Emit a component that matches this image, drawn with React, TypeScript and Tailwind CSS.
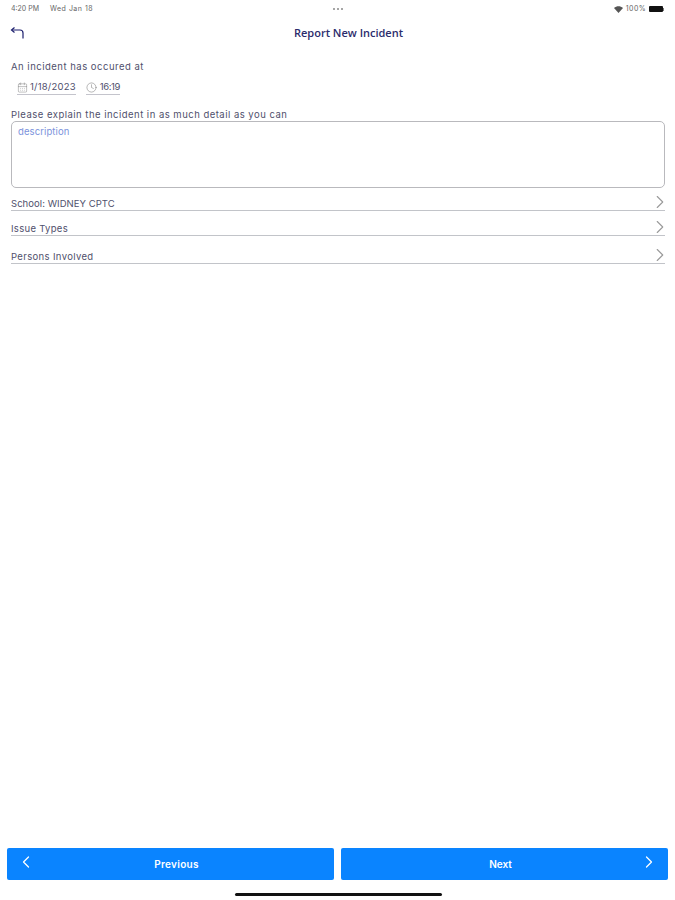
import React from 'react';
import { ChevronLeft, ChevronRight, CalendarDays, Clock } from 'lucide-react';

const rows = [
  { label: 'School: WIDNEY CPTC', height: 'h-[23px]', tracking: 'tracking-[0.05px]' },
  { label: 'Issue Types', height: 'h-[25px]', tracking: 'tracking-[0.3px]' },
  { label: 'Persons Involved', height: 'h-[28px]', tracking: 'tracking-[0.35px]' },
];

const App: React.FC = () => {
  return (
    <div className="w-[675px] h-[900px] bg-white flex flex-col overflow-hidden font-['Inter',sans-serif] text-[#50506c]">
      {/* status bar */}
      <div className="h-[14px] mt-[1px] pt-[2px] flex items-center pl-[11px] pr-[11px] text-[7px] text-[#666]">
        <div className="flex-1 flex gap-[11px]">
          <span>4:20 PM</span>
          <span className="tracking-[0.5px]">Wed Jan 18</span>
        </div>
        <div className="flex gap-[2px]">
          <span className="w-[2px] h-[2px] rounded-full bg-[#888]" />
          <span className="w-[2px] h-[2px] rounded-full bg-[#888]" />
          <span className="w-[2px] h-[2px] rounded-full bg-[#888]" />
        </div>
        <div className="flex-1 flex items-center justify-end gap-[3px]">
          <svg width="9" height="7" viewBox="0 0 9 7">
            <path d="M0 2 C2.500 -0.500 6.500 -0.500 9 2 L4.500 7 Z" fill="#555" />
          </svg>
          <span className="tracking-[0.4px]">100%</span>
          <div className="flex items-center">
            <span className="w-[14px] h-[6px] rounded-[1px] bg-[#111]" />
            <span className="w-[1px] h-[3px] bg-[#777]" />
          </div>
        </div>
      </div>

      {/* header */}
      <div className="h-[36px] relative flex items-center justify-center pl-[22px]">
        <svg className="absolute left-[10px] top-[11px]" width="15" height="14" viewBox="0 0 15 14" fill="none" stroke="#1c1f6e" strokeWidth="1.200">
          <path d="M4.500 1.500 L1.500 4 L4.500 6.500" />
          <path d="M2 4 H10 Q13 4 13 7 V12.500" />
        </svg>
        <span className="font-['Open_Sans',sans-serif] text-[11px] font-semibold text-[#2c2c6c]">Report New Incident</span>
      </div>

      <div className="pl-[11px] pr-[10px] flex flex-col flex-1">
        <p className="text-[9.500px] leading-[12px] mt-[10px] tracking-[0.5px]">An incident has occured at</p>

        <div className="flex gap-[10px] ml-[6px] mt-[7px] text-[9.500px]">
          <div className="flex items-center gap-[2px] h-[15px] border-b border-[#c4c4cc]">
            <CalendarDays size={11} strokeWidth={1} className="text-[#777]" />
            <span className="tracking-[0.2px]">1/18/2023</span>
          </div>
          <div className="flex items-center gap-[3px] h-[15px] border-b border-[#c4c4cc]">
            <Clock size={11} strokeWidth={1} className="text-[#666]" />
            <span className="tracking-[-0.4px]">16:19</span>
          </div>
        </div>

        <p className="text-[9.500px] leading-[12px] mt-[14px] tracking-[0.48px]">Please explain the incident in as much detail as you can</p>

        <div className="h-[67px] border border-[#b9b9bd] rounded-[5px] px-[6px] pt-[4px] text-[9.500px] leading-[12px] text-[#7b93dc] tracking-[0.1px]">
          description
        </div>

        {rows.map((row) => (
          <div key={row.label} className={`${row.height} flex items-end justify-between border-b border-[#c2c4c9] text-[9.500px] leading-[12px] ${row.tracking}`}>
            <span>{row.label}</span>
            <ChevronRight size={22} strokeWidth={1.200} className="text-[#9a9a9a] -mb-[3px] -mr-[6px] -mt-[4px]" />
          </div>
        ))}

        <div className="flex-1" />

        {/* footer buttons */}
        <div className="flex gap-[7px] ml-[-4px] mr-[-3px]">
          <button className="w-[327px] h-[32px] bg-[#0a84ff] rounded-[2px] relative text-white text-[10px] font-semibold tracking-[0.3px] flex items-center justify-center pl-[12px]">
            <ChevronLeft size={20} strokeWidth={1.500} className="absolute left-[9px] top-[4px]" />
            Previous
          </button>
          <button className="w-[327px] h-[32px] bg-[#0a84ff] rounded-[2px] relative text-white text-[10px] font-semibold flex items-center justify-center pr-[8px]">
            Next
            <ChevronRight size={20} strokeWidth={1.500} className="absolute right-[9px] top-[4px]" />
          </button>
        </div>

        <div className="h-[20px] flex items-end justify-center pb-[4px] pl-[1px]">
          <div className="w-[207px] h-[3px] rounded-full bg-[#111]" />
        </div>
      </div>
    </div>
  );
};

export default App;
